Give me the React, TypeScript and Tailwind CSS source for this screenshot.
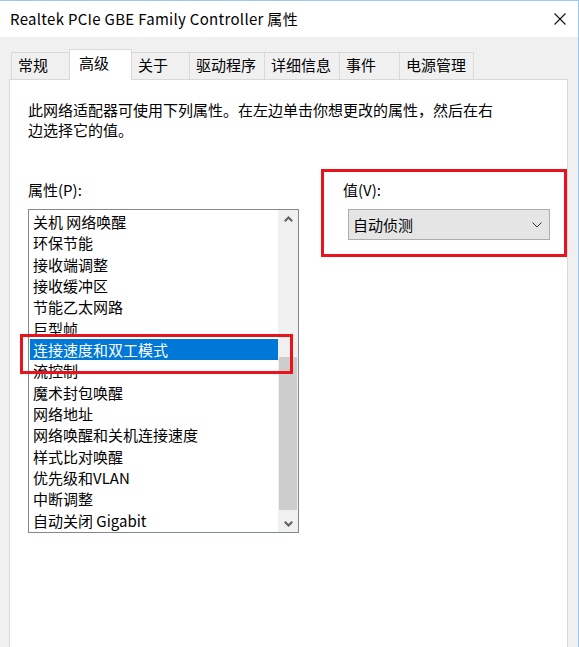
import React from "react";

const items = [
  "关机 网络唤醒",
  "环保节能",
  "接收端调整",
  "接收缓冲区",
  "节能乙太网路",
  "巨型帧",
  "连接速度和双工模式",
  "流控制",
  "魔术封包唤醒",
  "网络地址",
  "网络唤醒和关机连接速度",
  "样式比对唤醒",
  "优先级和VLAN",
  "中断调整",
  "自动关闭 Gigabit",
];

const tabs: { label: string; cls: string; active?: boolean }[] = [
  { label: "常规", cls: "w-[58px] border-l border-t" },
  { label: "高级", cls: "w-[63px] border-l border-t border-r", active: true },
  { label: "关于", cls: "w-[58px] border-t border-r" },
  { label: "驱动程序", cls: "w-[75px] border-t border-r" },
  { label: "详细信息", cls: "w-[75px] border-t border-r" },
  { label: "事件", cls: "w-[60px] border-t border-r" },
  { label: "电源管理", cls: "w-[74px] border-t border-r" },
];

export default function App() {
  return (
    <div
      className="relative w-[579px] h-[647px] overflow-hidden bg-[#f0f0f0] border-t border-r border-[#99c9f0] text-black text-[15px]"
      style={{ fontFamily: '"Microsoft YaHei", "Noto Sans CJK SC", "Noto Sans", sans-serif' }}
    >
      {/* title bar */}
      <div className="h-[36px] bg-white flex items-center justify-between pl-[10px] pr-[12px]">
        <span className="leading-[20px] tracking-[0.3px]">Realtek PCIe GBE Family Controller 属性</span>
        <svg width="12" height="12" viewBox="0 0 12 12">
          <path d="M0.5 0.5 L11.5 11.5 M11.5 0.5 L0.5 11.5" stroke="#111" strokeWidth="1.1" />
        </svg>
      </div>

      {/* tabs */}
      <div className="h-[42px] flex items-end pl-[11px]">
        {tabs.map((t) =>
          t.active ? (
            <div
              key={t.label}
              className={`${t.cls} h-[31px] relative z-10 -mb-px bg-white border-[#d9d9d9] pl-[9px] pt-[3px] leading-[20px]`}
            >
              {t.label}
            </div>
          ) : (
            <div
              key={t.label}
              className={`${t.cls} h-[27px] bg-[#f0f0f0] border-[#d9d9d9] pl-[6px] pt-[2px] leading-[20px]`}
            >
              {t.label}
            </div>
          )
        )}
      </div>

      {/* panel */}
      <div className="ml-[9px] w-[559px] h-[600px] bg-white border border-[#d9d9d9] pt-[20px] pl-[18px]">
        <div className="leading-[20px]">
          此网络适配器可使用下列属性。在左边单击你想更改的属性，然后在右
          <br />
          边选择它的值。
        </div>

        <div className="flex mt-[40px]">
          {/* left column */}
          <div className="w-[271px]">
            <div className="leading-[20px]">属性(P):</div>
            <div className="mt-[9px] h-[324px] border border-[#828790] flex">
              <div className="flex-1 py-px pl-px">
                {items.map((it, i) => (
                  <div
                    key={it}
                    className={`h-[21.33px] leading-[21.33px] pl-[3px] whitespace-nowrap ${
                      i === 6 ? "bg-[#0078d7] text-white" : ""
                    }`}
                  >
                    {it}
                  </div>
                ))}
              </div>
              <div className="w-[20px] bg-[#f0f0f0] flex flex-col">
                <div className="h-[17px] flex items-center justify-center">
                  <svg width="9" height="6" viewBox="0 0 9 6">
                    <path d="M0.8 5.2 L4.5 1.5 L8.2 5.2" fill="none" stroke="#606060" strokeWidth="2" />
                  </svg>
                </div>
                <div className="flex-1 flex flex-col pt-[130px] pb-[5px]">
                  <div className="flex-1 bg-[#cdcdcd] mx-[1px]" />
                </div>
                <div className="h-[17px] flex items-center justify-center">
                  <svg width="9" height="6" viewBox="0 0 9 6">
                    <path d="M0.8 0.8 L4.5 4.5 L8.2 0.8" fill="none" stroke="#606060" strokeWidth="2" />
                  </svg>
                </div>
              </div>
            </div>
          </div>

          {/* right column */}
          <div className="ml-[44px] w-[210px]">
            <div className="leading-[20px]">值(V):</div>
            <div className="mt-[9px] ml-[5px] w-[202px] h-[31px] bg-[#e5e5e5] border border-[#adadad] flex items-center justify-between pl-[4px] pr-[7px]">
              <span className="leading-[20px]">自动侦测</span>
              <svg width="10" height="6" viewBox="0 0 10 6">
                <path d="M0.5 0.5 L5 5 L9.5 0.5" fill="none" stroke="#333" strokeWidth="1" />
              </svg>
            </div>
          </div>
        </div>
      </div>

      {/* red highlight boxes */}
      <div className="absolute left-[20px] top-[333px] w-[273px] h-[40px] border-[3px] border-[#e8131c] pointer-events-none" />
      <div className="absolute left-[321px] top-[168px] w-[246px] h-[88px] border-[3px] border-[#e8131c] pointer-events-none" />
    </div>
  );
}
